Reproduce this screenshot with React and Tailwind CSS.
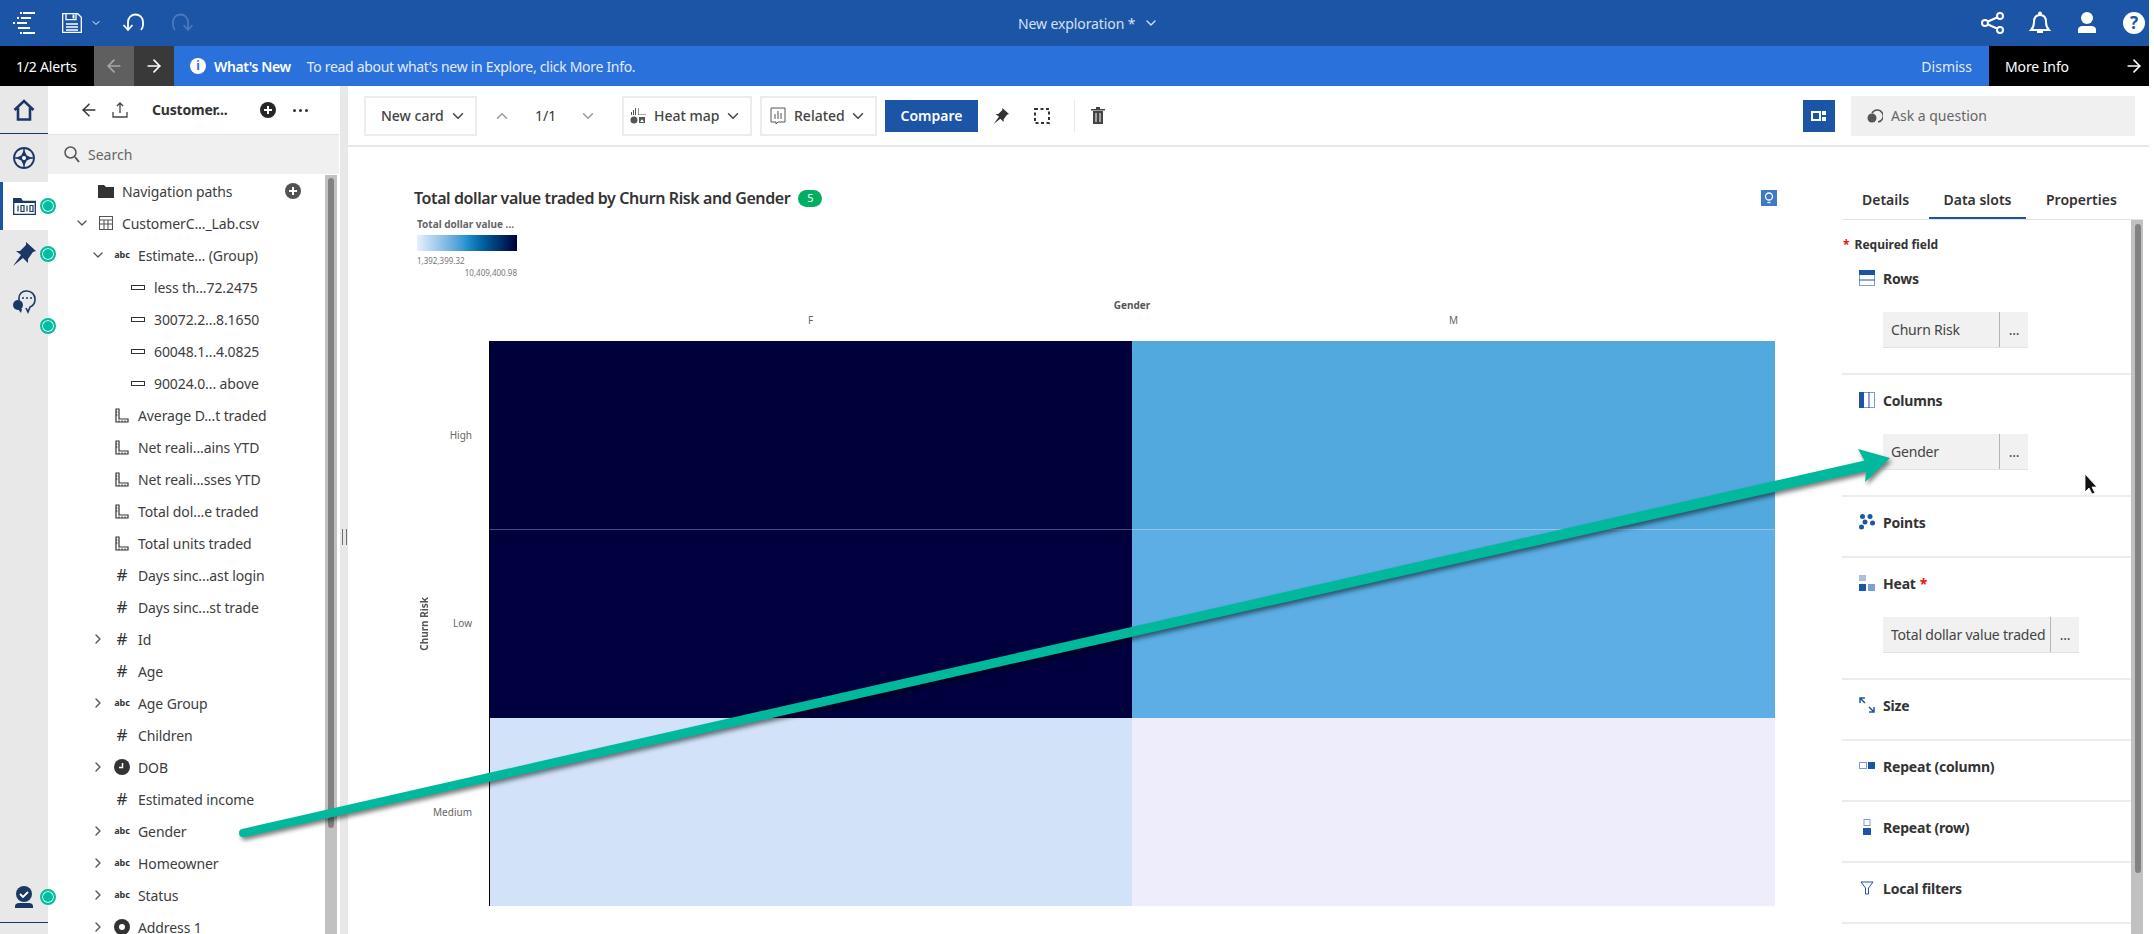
import React from 'react';
import { ArrowLeft, ArrowRight, ChevronDown, ChevronRight, ChevronUp } from 'lucide-react';

const Save = () => (
  <svg width="20" height="20" viewBox="0 0 20 20" fill="none" stroke="white" strokeWidth="1.3">
    <path d="M.7.700h15l3.600 3.600v15H.7z" />
    <path d="M4 .7v6h10v-6" />
    <path d="M10.500 1.500h2v4h-2z" fill="white" stroke="none" />
    <path d="M4 11h12M4 14h12M4 17h12" />
  </svg>
);

const Undo = ({ color = 'white' }) => (
  <svg width="24" height="24" viewBox="0 0 24 24" fill="none" stroke={color} strokeWidth="1.8">
    <path d="M6 18V11a7.500 7.500 0 0 1 15 0v3a8 8 0 0 1-2 5" />
    <path d="M1.500 14L6 19l4.500-5" />
  </svg>
);

const Redo = ({ color }) => (
  <svg width="24" height="24" viewBox="0 0 24 24" fill="none" stroke={color} strokeWidth="1.8">
    <path d="M18 18V11a7.500 7.500 0 0 0-15 0v3a8 8 0 0 0 2 5" />
    <path d="M13.500 14l4.500 5 4.500-5" />
  </svg>
);

const TopBar = () => (
  <div className="h-[46px] bg-[#1c54a6] flex items-center text-white relative">
    <svg className="ml-[13px]" width="22" height="24" viewBox="0 0 22 24" fill="white">
      <rect x="7" y="1" width="2" height="2" />
      <rect x="10" y="1" width="12" height="2" />
      <rect x="4" y="6" width="2" height="2" />
      <rect x="8" y="6" width="10" height="2" />
      <rect x="0" y="11" width="2" height="2" />
      <rect x="4" y="11" width="10" height="2" />
      <rect x="5" y="16" width="12" height="2" />
      <rect x="7" y="21" width="2" height="2" />
      <rect x="10" y="21" width="12" height="2" />
    </svg>
    <div className="ml-[27px]"><Save /></div>
    <ChevronDown className="ml-[8px]" size={12} />
    <div className="ml-[20px]"><Undo /></div>
    <div className="ml-[24px]"><Redo color="#4a78bd" /></div>
    <div className="absolute left-[1018px] top-0 h-full flex items-center text-[14px] text-[#d5e0f2] tracking-[-0.1px]">
      New exploration *
      <ChevronDown className="ml-[8px]" size={16} />
    </div>
    <div className="ml-auto flex items-center mr-[3px]">
      <svg width="24" height="24" viewBox="0 0 24 24" fill="none" stroke="white" strokeWidth="2">
        <circle cx="19" cy="5" r="3" />
        <circle cx="4" cy="12" r="3" />
        <circle cx="19" cy="19" r="3" />
        <path d="M7 10.500l9-4M7 13.500l9 4" />
      </svg>
      <svg className="ml-[24px]" width="22" height="24" viewBox="0 0 22 24" fill="none" stroke="white" strokeWidth="2">
        <path d="M2 19c2-2 3-4 3-8s2-7 6-7 6 3 6 7 1 6 3 8z" />
        <path d="M8 21h6" />
        <circle cx="11" cy="2.500" r="1" fill="white" />
      </svg>
      <svg className="ml-[26px]" width="20" height="24" viewBox="0 0 20 24" fill="white">
        <circle cx="10" cy="7" r="6" />
        <path d="M1 22v-3c0-3 2-4 5-4h8c3 0 5 1 5 4v3z" />
      </svg>
      <div className="ml-[26px] mr-[1px] w-[22px] h-[22px] rounded-full bg-white flex items-center justify-center text-[#1c54a6] text-[17px] font-bold">?</div>
    </div>
  </div>
);

const AlertBar = () => (
  <div className="h-10 bg-[#2a71dc] flex items-center text-white text-[14px]">
    <div className="w-[94px] h-full bg-black flex items-center pl-4 tracking-[-0.2px]">1/2 Alerts</div>
    <div className="w-10 h-full bg-[#5f5f5f] flex items-center justify-center text-[#a8a8a8]"><ArrowLeft size={20} /></div>
    <div className="w-10 h-full bg-[#393939] flex items-center justify-center"><ArrowRight size={20} /></div>
    <div className="ml-4 w-4 h-4 rounded-full bg-white text-[#2a71dc] text-[12px] font-bold flex items-center justify-center">i</div>
    <span className="ml-2 font-semibold tracking-[-0.4px]">What's New</span>
    <span className="ml-4 text-[#e2ebf9] tracking-[-0.3px]">To read about what's new in Explore, click More Info.</span>
    <span className="ml-auto text-[#e2ebf9]">Dismiss</span>
    <div className="ml-[17px] w-[160px] h-full bg-black flex items-center pl-4 tracking-[-0.1px]">
      More Info
      <ArrowRight className="ml-auto mr-[5px]" size={20} />
    </div>
  </div>
);

const Badge = ({ className }) => (
  <span className={`absolute -right-2 w-4 h-4 rounded-full bg-[#00bfa0] border-2 border-[#00bfa0] shadow-[inset_0_0_0_1px_white] ${className}`} />
);

const Rail = () => (
  <div className="w-12 bg-[#e8e8e8] flex flex-col relative z-10 shrink-0">
    <div className="h-12 border-b border-[#1b3765] flex items-center justify-center">
      <svg width="22" height="22" viewBox="0 0 22 22" fill="none" stroke="#1b3765" strokeWidth="2.600">
        <path d="M1.500 11L11 2l9.500 9M5 9v11.500h12V9" />
      </svg>
    </div>
    <div className="h-12 flex items-center justify-center">
      <svg width="24" height="24" viewBox="0 0 24 24" fill="none" stroke="#1b3765" strokeWidth="1.800">
        <circle cx="12" cy="12" r="10" />
        <path d="M12 2v20M2 12h20" strokeWidth="1.400" />
        <path d="M12 6l2 4 4 2-4 2-2 4-2-4-4-2 4-2z" fill="#1b3765" />
        <circle cx="12" cy="12" r="2" fill="white" stroke="none" />
      </svg>
    </div>
    <div className="h-12 bg-white border-l-[3px] border-[#1c54a6] flex items-center pl-[10px] relative">
      <svg width="23" height="17" viewBox="0 0 23 17" fill="none" stroke="#1b3765" strokeWidth="1.300">
        <path d="M.7 3.500h21.600v12.800H.7z" />
        <path d="M0 4V0h8l2 3h13v2H0z" fill="#1b3765" stroke="none" />
        <path d="M5 7.500v6M8 7.500h3v6H8zM14 7.500v6M17 7.500h3v6h-3z" strokeWidth="1.200" />
      </svg>
      <Badge className="top-4" />
    </div>
    <div className="h-12 flex items-center justify-center relative">
      <svg width="24" height="24" viewBox="0 0 24 24" fill="#1b3765">
        <path d="M14 0l10 9-3 1-5 7 0 4-5-5-10 8 8-11-5-4h4l6-6z" />
      </svg>
      <Badge className="top-4" />
    </div>
    <div className="h-12 flex items-center justify-center relative">
      <svg width="24" height="24" viewBox="0 0 24 24">
        <path d="M7 10V8a7 7 0 0 1 7-7h1a8 8 0 0 1 8 8v1a8 8 0 0 1-5 7l-2 5-2-4" fill="none" stroke="#1b3765" strokeWidth="1.600" />
        <circle cx="6" cy="15" r="5" fill="#1b3765" />
        <path d="M9 23l-3-4h4z" fill="#1b3765" />
        <circle cx="11" cy="8" r="1" fill="#1b3765" />
        <circle cx="15" cy="8" r="1" fill="#1b3765" />
        <circle cx="19" cy="8" r="1" fill="#1b3765" />
      </svg>
      <Badge className="-bottom-2" />
    </div>
    <div className="mt-auto mb-[11px] h-[50px] border-b border-[#1b3765] flex items-center justify-center relative">
      <svg width="20" height="24" viewBox="0 0 20 24">
        <circle cx="10" cy="8" r="8" fill="#1b3765" />
        <path d="M6 8l3 3 5-5" fill="none" stroke="white" strokeWidth="1.800" />
        <path d="M1 22v-2c0-2 2-3 4-3h10c2 0 4 1 4 3v2z" fill="#1b3765" />
      </svg>
      <Badge className="top-4" />
    </div>
  </div>
);

const Abc = () => <span className="text-[9px] font-bold text-[#333]">abc</span>;
const Hash = () => <span className="text-[17px] text-[#333]">#</span>;
const Member = () => <span className="w-[14px] h-[5px] border border-[#333] block" />;
const Measure = () => (
  <svg width="14" height="15" viewBox="0 0 14 15" fill="none" stroke="#333" strokeWidth="1.200">
    <path d="M1 1h3v10h9v3H1z" />
    <path d="M1 4h1.500M1 7h1.500M4 12.500V14M7 12.500V14M10 12.500V14" />
  </svg>
);
const Clock = () => (
  <svg width="16" height="16" viewBox="0 0 16 16">
    <circle cx="8" cy="8" r="8" fill="#333" />
    <path d="M8.500 4v4.500H5" fill="none" stroke="white" strokeWidth="1.500" />
  </svg>
);
const Person = () => (
  <svg width="16" height="16" viewBox="0 0 16 16">
    <circle cx="8" cy="8" r="8" fill="#333" />
    <circle cx="8" cy="8" r="3" fill="white" />
  </svg>
);
const Folder = () => (
  <svg width="16" height="13" viewBox="0 0 16 13" fill="#333"><path d="M0 0h6l2 2h8v11H0z" /></svg>
);
const TableIcon = () => (
  <svg width="14" height="14" viewBox="0 0 14 14" fill="none" stroke="#555" strokeWidth="1.100">
    <path d="M.5.500h13v13H.5zM.5 4h13M.5 8h13M5 4v9.500M9 4v9.500" />
  </svg>
);

const LEVELS = ['pl-[26px]', 'pl-[42px]', 'pl-[58px]'];

const TREE = [
  { level: 0, icon: <Folder />, label: 'Navigation paths', add: true },
  { level: 0, icon: <TableIcon />, label: 'CustomerC..._Lab.csv', open: true },
  { level: 1, icon: <Abc />, label: 'Estimate... (Group)', open: true },
  { level: 2, icon: <Member />, label: 'less th...72.2475' },
  { level: 2, icon: <Member />, label: '30072.2...8.1650' },
  { level: 2, icon: <Member />, label: '60048.1...4.0825' },
  { level: 2, icon: <Member />, label: '90024.0... above' },
  { level: 1, icon: <Measure />, label: 'Average D...t traded' },
  { level: 1, icon: <Measure />, label: 'Net reali...ains YTD' },
  { level: 1, icon: <Measure />, label: 'Net reali...sses YTD' },
  { level: 1, icon: <Measure />, label: 'Total dol...e traded' },
  { level: 1, icon: <Measure />, label: 'Total units traded' },
  { level: 1, icon: <Hash />, label: 'Days sinc...ast login' },
  { level: 1, icon: <Hash />, label: 'Days sinc...st trade' },
  { level: 1, icon: <Hash />, label: 'Id', closed: true },
  { level: 1, icon: <Hash />, label: 'Age' },
  { level: 1, icon: <Abc />, label: 'Age Group', closed: true },
  { level: 1, icon: <Hash />, label: 'Children' },
  { level: 1, icon: <Clock />, label: 'DOB', closed: true },
  { level: 1, icon: <Hash />, label: 'Estimated income' },
  { level: 1, icon: <Abc />, label: 'Gender', closed: true },
  { level: 1, icon: <Abc />, label: 'Homeowner', closed: true },
  { level: 1, icon: <Abc />, label: 'Status', closed: true },
  { level: 1, icon: <Person />, label: 'Address 1', closed: true },
];

const PlusCircle = ({ color }) => (
  <svg width="16" height="16" viewBox="0 0 16 16">
    <circle cx="8" cy="8" r="8" fill={color} />
    <path d="M8 4v8M4 8h8" stroke="white" strokeWidth="2" />
  </svg>
);

const Panel = () => (
  <div className="w-[292px] shrink-0 flex flex-col bg-white">
    <div className="h-12 flex items-center relative text-[#333]">
      <ArrowLeft className="ml-[31px]" size={20} strokeWidth={1.800} />
      <svg className="ml-[13px]" width="16" height="16" viewBox="0 0 16 16" fill="none" stroke="#444" strokeWidth="1.300">
        <path d="M8 11V1M5 4l3-3 3 3M1 10v5h14v-5" />
      </svg>
      <span className="ml-[24px] text-[14px] font-bold leading-none tracking-[-0.2px]">Customer...</span>
      <div className="ml-[32px]"><PlusCircle color="#262626" /></div>
      <span className="ml-[17px] flex gap-[3px]">
        <i className="w-[3px] h-[3px] rounded-full bg-[#333]" />
        <i className="w-[3px] h-[3px] rounded-full bg-[#333]" />
        <i className="w-[3px] h-[3px] rounded-full bg-[#333]" />
      </span>
    </div>
    <div className="h-10 mr-[1px] bg-[#f0f0f0] border-t border-[#e4e4e4] flex items-center pl-4 text-[14px] text-[#666]">
      <svg className="mr-2" width="16" height="17" viewBox="0 0 16 17" fill="none" stroke="#555" strokeWidth="1.500">
        <circle cx="6.500" cy="6.500" r="5.500" />
        <path d="M11 11l4 5" strokeWidth="2" />
      </svg>
      Search
    </div>
    <div className="flex-1 flex min-h-0 mt-[1px] mr-[3px]">
      <div className="flex-1 overflow-hidden">
        {TREE.map((row) => (
          <div key={row.label} className={`h-8 flex items-center shrink-0 text-[14px] text-[#3d3d3d] tracking-[-0.1px] ${LEVELS[row.level]}`}>
            <span className="w-4 flex justify-center text-[#555]">
              {row.open && <ChevronDown size={16} strokeWidth={2} />}
              {row.closed && <ChevronRight size={16} strokeWidth={2} />}
            </span>
            <span className="w-8 flex justify-center">{row.icon}</span>
            <span className="whitespace-nowrap">{row.label}</span>
            {row.add && <span className="ml-auto mr-6"><PlusCircle color="#525252" /></span>}
          </div>
        ))}
      </div>
      <div className="w-3 bg-[#c1c1c1] pt-[3px] pl-[3px]">
        <div className="w-[6px] h-[650px] rounded-[3px] bg-[#828282]" />
      </div>
    </div>
  </div>
);

const Splitter = () => (
  <div className="w-2 shrink-0 bg-[#e8e8e8] flex flex-col items-center justify-center">
    <div className="mt-[54px] w-[5px] h-4 border-x border-[#707070]" />
  </div>
);

const ToolButton = ({ width, children }) => (
  <div className={`h-10 border-2 border-[#ededed] flex items-center text-[14px] font-medium text-[#444] ${width}`}>
    {children}
  </div>
);

const Toolbar = () => (
  <div className="h-[61px] border-b-2 border-[#e8e8e8] flex items-center pl-4 pr-[14px]">
    <ToolButton width="w-[113px] pl-[15px]">
      New card
      <ChevronDown className="ml-auto mr-[8px]" size={18} />
    </ToolButton>
    <div className="w-[145px] flex items-center text-[#9a9a9a]">
      <ChevronUp className="ml-[16px]" size={18} />
      <span className="ml-[24px] text-[14px] text-[#333]">1/1</span>
      <ChevronDown className="ml-[23px]" size={18} />
    </div>
    <ToolButton width="w-[130px] pl-[6px] mr-2">
      <svg width="16" height="18" viewBox="0 0 16 18" fill="#555">
        <path d="M1 5h1v3H1zM3 3h1v5H3zM5 1h1v7H5zM8 1v7h8v-.6H8.600V1z" />
        <circle cx="4" cy="13" r="3.500" />
        <path d="M9 10h6v6H9zM10 15h4l-2-3z" fill="#555" />
      </svg>
      <span className="ml-[8px]">Heat map</span>
      <ChevronDown className="ml-auto mr-[8px]" size={18} />
    </ToolButton>
    <ToolButton width="w-[117px] pl-[8px] mr-2">
      <svg width="16" height="18" viewBox="0 0 16 18" fill="none" stroke="#555">
        <path d="M1 1h14v14H8l-2 2v-2H1z" />
        <path d="M5 7v5M8 4v8M11 6v6" />
      </svg>
      <span className="ml-[8px]">Related</span>
      <ChevronDown className="ml-auto mr-[8px]" size={18} />
    </ToolButton>
    <div className="w-[93px] h-8 bg-[#1c54a6] text-white text-[14px] font-semibold flex items-center justify-center">Compare</div>
    <svg className="ml-[15px]" width="16" height="16" viewBox="0 0 24 24" fill="#333">
      <path d="M14 0l10 9-3 1-5 7 0 4-5-5-10 8 8-11-5-4h4l6-6z" />
    </svg>
    <svg className="ml-[25px]" width="16" height="16" viewBox="0 0 16 16" fill="none" stroke="#333" strokeWidth="2" strokeDasharray="3 2.500">
      <rect x="1" y="1" width="14" height="14" />
    </svg>
    <span className="ml-6 w-px h-8 bg-[#e8e8e8]" />
    <svg className="ml-4" width="14" height="17" viewBox="0 0 14 17" fill="#444">
      <path d="M0 2h14v1.500H0zM5 0h4v2H5zM2 4h10v13H2z" />
      <path d="M5 6v9M9 6v9" stroke="white" />
    </svg>
    <div className="ml-auto w-8 h-8 bg-[#1c54a6] flex items-center justify-center">
      <svg width="16" height="12" viewBox="0 0 16 12" fill="none">
        <rect x="1" y="2" width="8" height="8" stroke="white" strokeWidth="2" />
        <path d="M11 1h4v4h-4zM11 7h4v4h-4z" fill="white" />
      </svg>
    </div>
    <div className="ml-4 w-[284px] h-10 bg-[#f0f0f0] flex items-center pl-4 text-[14px] text-[#666]">
      <svg className="mr-2" width="16" height="16" viewBox="0 0 16 16">
        <path d="M5 5a6 6 0 1 1 6 9" fill="none" stroke="#555" strokeWidth="1.500" />
        <circle cx="5" cy="10" r="4.500" fill="#555" />
      </svg>
      Ask a question
    </div>
  </div>
);

const Chart = () => (
  <div className="flex-1 pl-[66px] pr-[65px] pt-[41px] min-w-0">
    <div className="flex items-center h-5">
      <span className="text-[16px] font-semibold text-[#333] tracking-[-0.4px]">Total dollar value traded by Churn Risk and Gender</span>
      <span className="ml-2 w-6 h-[17px] rounded-full bg-[#00b060] text-white text-[11px] flex items-center justify-center">5</span>
      <div className="ml-auto w-4 h-4 bg-[#3f78c8] flex items-center justify-center">
        <svg width="10" height="12" viewBox="0 0 10 12" fill="none" stroke="white" strokeWidth="1.300">
          <circle cx="5" cy="4.500" r="3.500" />
          <path d="M3.500 10.500h3" />
        </svg>
      </div>
    </div>
    <div className="ml-[3px] mt-[9px] w-[100px]">
      <div className="text-[10px] font-bold leading-[14px] text-[#666] whitespace-nowrap">Total dollar value ...</div>
      <div className="mt-[4px] h-4 bg-gradient-to-r from-[#e8f0fd] via-[#2090d0] to-[#00003a]" />
      <div className="mt-[4px] text-[8px] leading-[12px] text-[#777]">1,392,399.32</div>
      <div className="text-[8px] leading-[12px] text-[#777] text-right whitespace-nowrap">10,409,400.98</div>
    </div>
    <div className="mt-[18px] grid grid-cols-[20px_55px_643px_643px] grid-rows-[16px_28px_188px_189px_188px]">
      <div className="col-start-3 col-span-2 text-center text-[10px] font-bold text-[#555] leading-[16px]">Gender</div>
      <div className="row-start-2 col-start-3 pt-[1px] text-center text-[10px] text-[#666] leading-[12px]">F</div>
      <div className="row-start-2 col-start-4 pt-[1px] text-center text-[10px] text-[#666] leading-[12px]">M</div>
      <div className="row-start-3 row-span-3 col-start-1 flex items-center justify-center">
        <span className="[writing-mode:vertical-rl] rotate-180 text-[10px] font-bold text-[#555]">Churn Risk</span>
      </div>
      <div className="row-start-3 col-start-2 flex items-center justify-end pr-[17px] text-[10px] text-[#666]">High</div>
      <div className="row-start-4 col-start-2 flex items-center justify-end pr-[17px] text-[10px] text-[#666]">Low</div>
      <div className="row-start-5 col-start-2 flex items-center justify-end pr-[17px] text-[10px] text-[#666]">Medium</div>
      <div className="row-start-3 col-start-3 bg-[#00003a] border-l border-black" />
      <div className="row-start-3 col-start-4 bg-[#52a9de]" />
      <div className="row-start-4 col-start-3 bg-[#00003e] border-l border-black border-t border-t-[#4a4a80]" />
      <div className="row-start-4 col-start-4 bg-[#5caee5] border-t border-t-[#8cc4ea]" />
      <div className="row-start-5 col-start-3 bg-[#d1e2f9] border-l border-black" />
      <div className="row-start-5 col-start-4 bg-[#eeedfb]" />
    </div>
  </div>
);

const Slot = ({ icon, title, required, pill, width }) => (
  <div className={`border-b-2 border-[#ececec] pl-[17px] pt-[16px] ${pill ? 'h-[122px]' : 'h-[61px]'}`}>
    <div className="flex items-center h-[18px] text-[14px] font-bold text-[#333] tracking-[-0.2px]">
      <span className="w-4 flex justify-center mr-2">{icon}</span>
      {title}
      {required && <span className="ml-1 text-[#f01010]">*</span>}
    </div>
    {pill && (
      <div className="ml-6 mt-[25px] h-9 flex w-fit border-b border-[#e2e2e2] bg-[#f1f1f1] text-[14px] text-[#444] tracking-[-0.2px]">
        <span className={`pl-2 flex items-center whitespace-nowrap ${width}`}>{pill}</span>
        <span className="w-[29px] border-l border-[#b5b5b5] flex items-center justify-center">...</span>
      </div>
    )}
  </div>
);

const BLUE = '#1c54a6';
const LIGHT = '#7b9fd4';

const RightPanel = () => (
  <div className="w-[307px] shrink-0 pr-[6px] flex flex-col">
    <div className="h-[73px] border-b border-[#e4e4e4] flex items-end text-[14px] font-semibold text-[#333]">
      <div className="w-[87px] h-[30px] pl-5">Details</div>
      <div className="w-[97px] h-[30px] border-b-2 border-[#1c54a6] text-center">Data slots</div>
      <div className="h-[30px] pl-5">Properties</div>
    </div>
    <div className="flex-1 flex min-h-0">
      <div className="flex-1 min-w-0">
        <div className="h-[33px] pt-[16px] pl-[1px] flex items-center text-[12px] font-bold text-[#333]">
          <span className="text-[#f01010] mr-[5px]">*</span>Required field
        </div>
        <Slot title="Rows" pill="Churn Risk" width="w-[116px]" icon={
          <svg width="16" height="16" viewBox="0 0 16 16" fill="none" stroke={LIGHT}>
            <rect x=".5" y=".5" width="15" height="15" />
            <rect x="0" y="0" width="16" height="5" fill={BLUE} stroke="none" />
            <path d="M0 10h16" stroke={BLUE} />
          </svg>
        } />
        <Slot title="Columns" pill="Gender" width="w-[116px]" icon={
          <svg width="16" height="16" viewBox="0 0 16 16" fill="none" stroke={LIGHT}>
            <rect x=".5" y=".5" width="15" height="15" />
            <rect x="0" y="0" width="5" height="16" fill={BLUE} stroke="none" />
            <path d="M10 0v16" stroke={BLUE} />
          </svg>
        } />
        <Slot title="Points" icon={
          <svg width="16" height="16" viewBox="0 0 16 16" fill={BLUE}>
            <circle cx="3.500" cy="2.500" r="2.500" /><circle cx="11" cy="2.500" r="2.500" />
            <circle cx="6" cy="8" r="2.500" /><circle cx="13.500" cy="9" r="2.500" />
            <circle cx="2.500" cy="13" r="2.500" />
          </svg>
        } />
        <Slot title="Heat" required pill="Total dollar value traded" width="w-[167px]" icon={
          <svg width="16" height="16" viewBox="0 0 16 16">
            <rect x="0" y="0" width="7" height="6" fill="#a9c0e3" />
            <rect x="0" y="9" width="7" height="7" fill={BLUE} />
            <rect x="9" y="9" width="7" height="7" fill={LIGHT} />
          </svg>
        } />
        <Slot title="Size" icon={
          <svg width="16" height="16" viewBox="0 0 16 16" fill="none" stroke={BLUE} strokeWidth="1.500">
            <path d="M1 6V1h5M1 1l5 5M15 10v5h-5M15 15l-5-5" />
          </svg>
        } />
        <Slot title="Repeat (column)" icon={
          <svg width="16" height="8" viewBox="0 0 16 8" fill="none">
            <rect x=".5" y=".5" width="7" height="6" stroke={LIGHT} />
            <rect x="9" y="0" width="7" height="7" fill={BLUE} />
          </svg>
        } />
        <Slot title="Repeat (row)" icon={
          <svg width="8" height="16" viewBox="0 0 8 16" fill="none">
            <rect x="1" y=".5" width="6" height="6" stroke={LIGHT} />
            <rect x="0" y="9" width="8" height="7" fill={BLUE} />
          </svg>
        } />
        <Slot title="Local filters" icon={
          <svg width="14" height="14" viewBox="0 0 14 14" fill="none" stroke={BLUE}>
            <path d="M1 1h12L8.500 7v6h-3V7z" />
          </svg>
        } />
      </div>
      <div className="w-3 bg-[#c1c1c1] pt-[4px] pl-[4px]">
        <div className="w-[6px] h-[649px] rounded-[3px] bg-[#828282]" />
      </div>
    </div>
  </div>
);

const Overlay = () => (
  <svg className="absolute top-0 left-0 z-20 pointer-events-none" width="2154" height="934" viewBox="0 0 2154 934">
    <g className="drop-shadow-[2px_3px_2px_rgba(0,0,0,0.5)]" fill="#00b89c">
      <circle cx="243" cy="833" r="4" />
      <path d="M242 829L1867 460V471L244 837z" />
      <path d="M1890 458L1858 449L1867 465L1865 482z" />
    </g>
    <path d="M2085 474v18l4-4 3 6 3-1-3-6h5z" fill="#111" stroke="white" strokeWidth=".8" />
  </svg>
);

export default function App() {
  return (
    <div className="relative w-[2154px] h-[934px] overflow-hidden bg-white font-['Noto_Sans',sans-serif]">
      <div className="w-[2149px] h-full flex flex-col">
        <TopBar />
        <AlertBar />
        <div className="flex-1 flex min-h-0">
          <Rail />
          <Panel />
          <Splitter />
          <div className="flex-1 flex flex-col min-w-0">
            <Toolbar />
            <div className="flex-1 flex min-h-0">
              <Chart />
              <RightPanel />
            </div>
          </div>
        </div>
      </div>
      <Overlay />
    </div>
  );
}
